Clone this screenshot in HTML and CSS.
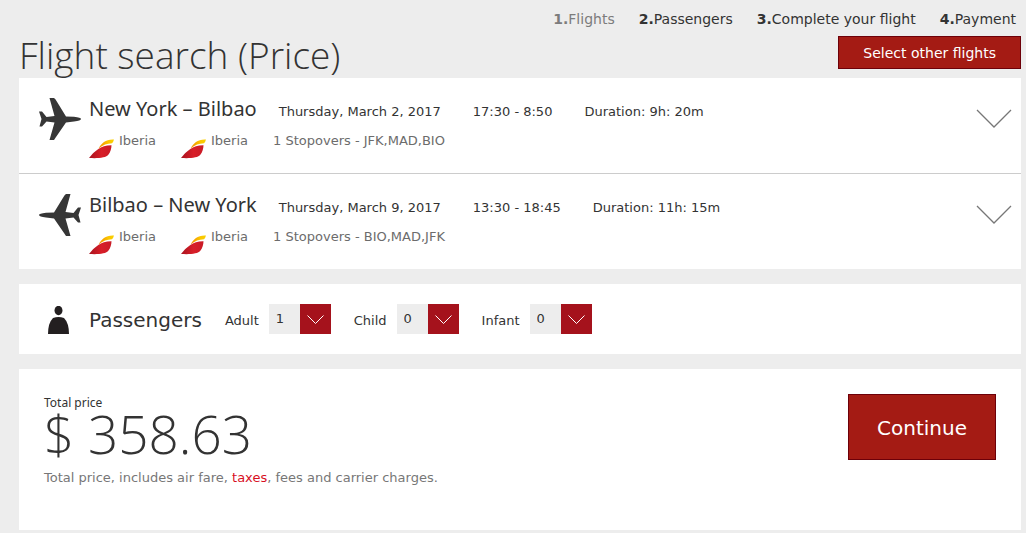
FILE: index.html
```html
<!DOCTYPE html>
<html lang="en">
<head>
<meta charset="utf-8">
<title>Flight search (Price)</title>
<link rel="stylesheet" href="styles.css">
</head>
<body>
<svg class="defs" aria-hidden="true">
  <defs>
    <linearGradient id="red"><stop offset="0" stop-color="#a8131f"/><stop offset=".55" stop-color="#d81e28"/><stop offset="1" stop-color="#c91b26"/></linearGradient>
    <linearGradient id="gold"><stop offset="0" stop-color="#ee8a00"/><stop offset=".6" stop-color="#fbc400"/><stop offset="1" stop-color="#f8d000"/></linearGradient>
    <symbol id="plane" viewBox="0 0 42 42"><path d="M10.500 0H15Q16.500 1 17.500 3L27 18.500L35 18.700Q42 19.500 42 21Q42 22.500 35 23.500L27 24.500L17 39L15 42H10.500L15.500 24.500L7.500 23.500L3 28.500H.500L2.500 21L0 13.500H3L7.500 19L15.500 18Z"/></symbol>
    <symbol id="iberia" viewBox="0 0 25 20"><path fill="url(#red)" d="M0 19C5 12.500 12 6 22.500 6.200C22.500 9 21.500 13 19.500 15.500C17 19 9 19.500 0 19Z"/><path fill="url(#gold)" d="M9.500 9.500C12.500 4 17 0 25 .500C24.500 2 24 3.500 23 4.300C18 4.500 14 6 9.500 9.500Z"/></symbol>
  </defs>
</svg>
<main class="page">
  <header class="top">
    <ol class="steps">
      <li class="step current"><b>1.</b>Flights</li>
      <li class="step"><b>2.</b>Passengers</li>
      <li class="step"><b>3.</b>Complete your flight</li>
      <li class="step"><b>4.</b>Payment</li>
    </ol>
    <div class="heading">
      <h1 class="title">Flight search (Price)</h1>
      <button class="button" type="button">Select other flights</button>
    </div>
  </header>

  <section class="panel">
    <article class="flight">
      <svg class="plane"><use href="#plane"/></svg>
      <div class="details">
        <div class="summary">
          <h2 class="route">New York – Bilbao</h2>
          <span>Thursday, March 2, 2017</span>
          <span>17:30 - 8:50</span>
          <span>Duration: 9h: 20m</span>
        </div>
        <div class="carriers">
          <span class="carrier"><svg class="logo"><use href="#iberia"/></svg>Iberia</span>
          <span class="carrier"><svg class="logo"><use href="#iberia"/></svg>Iberia</span>
          <span>1 Stopovers - JFK,MAD,BIO</span>
        </div>
      </div>
      <button class="expand" type="button" aria-label="Show outbound details"><svg class="chevron" viewBox="0 0 36 19"><path d="M1 1L18 18L35 1"/></svg></button>
    </article>
    <article class="flight">
      <svg class="plane back"><use href="#plane"/></svg>
      <div class="details">
        <div class="summary">
          <h2 class="route">Bilbao – New York</h2>
          <span>Thursday, March 9, 2017</span>
          <span>13:30 - 18:45</span>
          <span>Duration: 11h: 15m</span>
        </div>
        <div class="carriers">
          <span class="carrier"><svg class="logo"><use href="#iberia"/></svg>Iberia</span>
          <span class="carrier"><svg class="logo"><use href="#iberia"/></svg>Iberia</span>
          <span>1 Stopovers - BIO,MAD,JFK</span>
        </div>
      </div>
      <button class="expand" type="button" aria-label="Show return details"><svg class="chevron" viewBox="0 0 36 19"><path d="M1 1L18 18L35 1"/></svg></button>
    </article>
  </section>

  <section class="panel passengers">
    <svg class="person" viewBox="0 0 22 28"><ellipse cx="10.500" cy="4.500" rx="4" ry="4.700"/><path d="M0 28Q0 17 5 12Q10.500 10 16 12Q21 17 21 28Z"/></svg>
    <h2 class="subtitle">Passengers</h2>
    <div class="field">
      <label for="adult">Adult</label>
      <span class="picker"><select class="select" id="adult"><option>1</option><option>2</option></select><svg class="arrow" viewBox="0 0 31 30"><path d="M7.500 11.500L15.500 19.500L23.500 11.500"/></svg></span>
    </div>
    <div class="field">
      <label for="child">Child</label>
      <span class="picker"><select class="select" id="child"><option>0</option><option>1</option></select><svg class="arrow" viewBox="0 0 31 30"><path d="M7.500 11.500L15.500 19.500L23.500 11.500"/></svg></span>
    </div>
    <div class="field">
      <label for="infant">Infant</label>
      <span class="picker"><select class="select" id="infant"><option>0</option><option>1</option></select><svg class="arrow" viewBox="0 0 31 30"><path d="M7.500 11.500L15.500 19.500L23.500 11.500"/></svg></span>
    </div>
  </section>

  <section class="panel total">
    <div>
      <h2 class="caption">Total price</h2>
      <p class="price">$ 358.63</p>
      <p class="note">Total price, includes air fare, <a class="link" href="#taxes">taxes</a>, fees and carrier charges.</p>
    </div>
    <button class="button large" type="button">Continue</button>
  </section>
</main>
</body>
</html>
```

FILE: styles.css
```css
* { box-sizing: border-box; }
body {
  margin: 0;
  background: #ededed;
  color: #333;
  font: 13px/20px Verdana, "DejaVu Sans", sans-serif;
}
h1, h2, p, ol { margin: 0; padding: 0; font-weight: 400; }
button, select { font: inherit; }
.defs { position: absolute; width: 0; height: 0; }
.page { padding: 9px 5px 3px 19px; }

.steps {
  display: flex;
  justify-content: flex-end;
  gap: 24px;
  padding-right: 5px;
  list-style: none;
  font-size: 14px;
}
.current { color: #7c7c7c; }
.heading {
  display: flex;
  justify-content: space-between;
  align-items: flex-start;
  padding-top: 7px;
  height: 49px;
}
.title {
  font: 300 37px/38px "Open Sans", sans-serif;
}
.button {
  padding: 7px 24px 5px;
  border: 1px solid #6d0009;
  background: #a41b14;
  color: #fff;
  font-size: 14px;
  line-height: 19px;
}

.panel { background: #fff; margin-bottom: 15px; }
.flight {
  display: flex;
  align-items: flex-start;
  gap: 8px;
  padding: 20px 9px 0 20px;
  min-height: 95px;
}
.flight + .flight { border-top: 1px solid #ccc; min-height: 96px; }
.plane { width: 42px; height: 42px; fill: #363636; }
.back { transform: scaleX(-1); }
.details { flex: 1; }
.summary { display: flex; align-items: baseline; gap: 32px; }
.route {
  margin-right: -10px;
  font: 20px/22px "Noto Sans", sans-serif;
}
.carriers { display: flex; gap: 25px; padding-top: 9px; color: #6c6c6c; }
.carrier { display: flex; gap: 5px; }
.logo { width: 25px; height: 20px; margin-top: 8px; }
.expand { padding: 11px 0; border: 0; background: none; }
.chevron { display: block; width: 36px; height: 19px; fill: none; stroke: #777; stroke-width: 1.3; }

.passengers {
  display: flex;
  align-items: center;
  gap: 23px;
  padding: 20px 29px;
}
.person { width: 22px; height: 28px; margin-top: 2px; fill: #231f20; }
.subtitle { margin-left: -4px; padding-top: 2px; font-size: 20px; line-height: 28px; }
.field { display: flex; align-items: center; gap: 10px; }
.field label { padding-top: 4px; }
.picker { display: flex; }
.select {
  appearance: none;
  width: 31px;
  height: 30px;
  padding: 0 7px;
  border: 0;
  border-radius: 0;
  background: #ededed;
  color: #333;
}
.arrow { width: 31px; height: 30px; background: #a5121c; fill: none; stroke: #fff; }

.total {
  display: flex;
  justify-content: space-between;
  align-items: flex-start;
  min-height: 161px;
  margin: 0;
  padding: 25px;
}
.caption { font: 12px/18px "Noto Sans", sans-serif; }
.price { font: 300 53px/44px "Open Sans", sans-serif; }
.note { padding-top: 12px; color: #777; }
.link { color: #d8101f; text-decoration: none; }
.large { padding: 21px 28px 19px; font-size: 20px; line-height: 24px; }
```
